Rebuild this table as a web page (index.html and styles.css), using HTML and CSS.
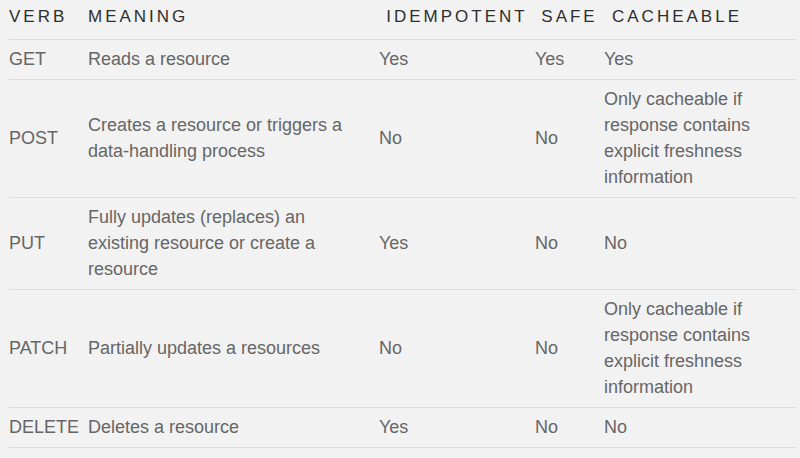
FILE: index.html
```html
<!DOCTYPE html>
<html>
<head>
<meta charset="utf-8">
<link rel="stylesheet" href="styles.css">
</head>
<body>
<div class="wrap">
<table class="verbs">
  <colgroup>
    <col class="c-verb"><col class="c-meaning"><col class="c-idem"><col class="c-safe"><col class="c-cache">
  </colgroup>
  <thead>
    <tr><th class="h-left">Verb</th><th class="h-left">Meaning</th><th class="h-center">Idempotent</th><th class="h-center">Safe</th><th class="h-cache">Cacheable</th></tr>
  </thead>
  <tbody>
    <tr><td>GET</td><td>Reads a resource</td><td>Yes</td><td>Yes</td><td>Yes</td></tr>
    <tr><td>POST</td><td>Creates a resource or triggers a data&#8209;handling process</td><td>No</td><td>No</td><td>Only cacheable if response contains explicit freshness information</td></tr>
    <tr><td>PUT</td><td>Fully updates (replaces) an<br>existing resource or create a resource</td><td>Yes</td><td>No</td><td>No</td></tr>
    <tr><td>PATCH</td><td>Partially updates a resources</td><td>No</td><td>No</td><td>Only cacheable if response contains explicit freshness information</td></tr>
    <tr><td>DELETE</td><td>Deletes a resource</td><td>Yes</td><td>No</td><td>No</td></tr>
  </tbody>
</table>
</div>
</body>
</html>
```

FILE: styles.css
```css
html, body {
  margin: 0;
  padding: 0;
  background: #f2f2f2;
}
.wrap {
  padding: 0 4px 0 9px;
}
.verbs {
  width: 787px;
  border-collapse: collapse;
  table-layout: fixed;
  font-family: "Liberation Sans", Arial, sans-serif;
}
.c-verb { width: 79px; }
.c-meaning { width: 291px; }
.c-idem { width: 156px; }
.c-safe { width: 69px; }
.c-cache { width: 192px; }
.verbs th {
  font-weight: normal;
  font-size: 17px;
  letter-spacing: 3px;
  text-transform: uppercase;
  color: #2e2e2e;
  line-height: 26px;
  padding: 4px 0 9px 0;
  border-bottom: 1px solid #dcdcdc;
  white-space: nowrap;
}
.verbs th.h-left { text-align: left; }
.verbs th.h-center { text-align: center; }
.verbs th.h-cache { text-align: center; padding-right: 46px; }
.verbs td {
  font-size: 18px;
  line-height: 26px;
  color: #666;
  padding: 6px 6px 7px 0;
  border-bottom: 1px solid #dcdcdc;
  vertical-align: middle;
}
```
